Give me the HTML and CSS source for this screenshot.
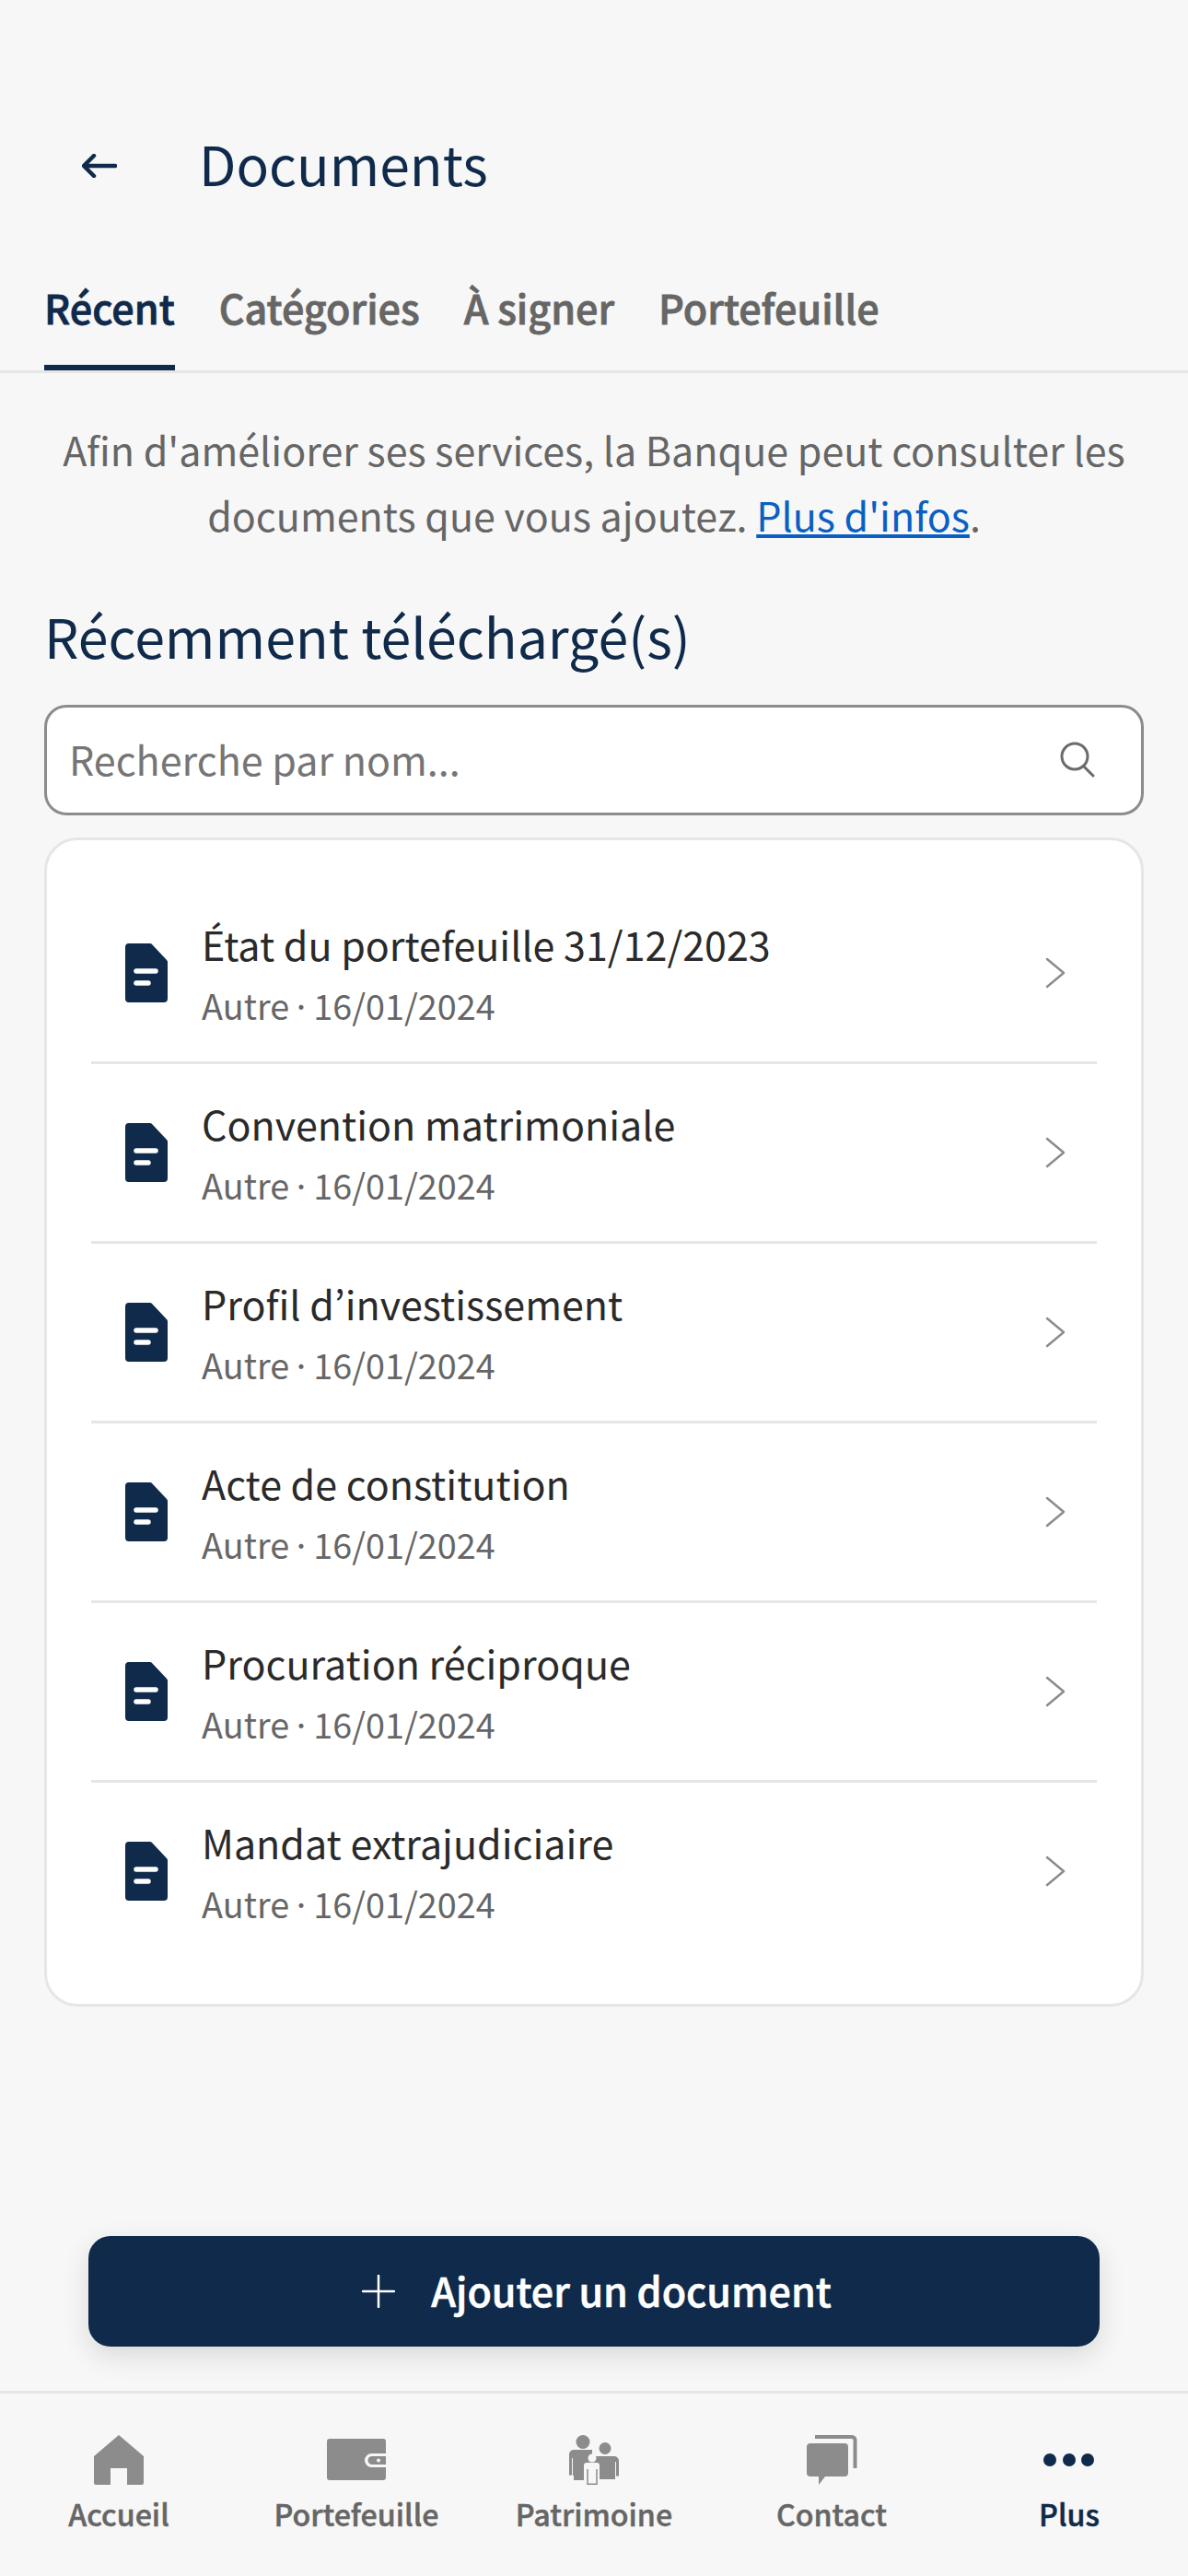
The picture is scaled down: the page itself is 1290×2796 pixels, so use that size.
FILE: index.html
```html
<!DOCTYPE html>
<html lang="fr">
<head>
<meta charset="utf-8">
<title>Documents</title>
<link rel="stylesheet" href="styles.css">
</head>
<body>
<div class="page">
  <header class="topbar">
    <svg class="back" viewBox="0 0 38 26"><path d="M36 13H3M13 2 2 13l11 11" fill="none" stroke="#0f2a4a" stroke-width="4.5" stroke-linecap="round" stroke-linejoin="round"/></svg>
    <h1 class="title">Documents</h1>
  </header>
  <nav class="tabs">
    <span class="tab tab-active">Récent</span>
    <span class="tab">Catégories</span>
    <span class="tab">À signer</span>
    <span class="tab">Portefeuille</span>
  </nav>
  <p class="info">Afin d'améliorer ses services, la Banque peut consulter les documents que vous ajoutez. <a class="link" href="#">Plus d'infos</a>.</p>
  <h2 class="heading">Récemment téléchargé(s)</h2>
  <div class="search">
    <span class="placeholder">Recherche par nom...</span>
    <svg class="search-icon" viewBox="0 0 38 40"><circle cx="16" cy="16" r="14" fill="none" stroke="#6b6b6b" stroke-width="3"/><path d="M26 27l10 10" stroke="#6b6b6b" stroke-width="3" stroke-linecap="round"/></svg>
  </div>
  <section class="card">
    <div class="row">
      <svg class="doc" viewBox="0 0 46 64"><path class="doc-body" d="M4 0H27a3 3 0 0 1 2 1L45 18a3 3 0 0 1 1 2V60a4 4 0 0 1-4 4H4a4 4 0 0 1-4-4V4a4 4 0 0 1 4-4z"/><path class="doc-lines" d="M12 30H33M12 43H25"/></svg>
      <div class="row-text"><div class="row-title">État du portefeuille 31/12/2023</div><div class="row-sub">Autre · 16/01/2024</div></div>
      <svg class="chev" viewBox="0 0 24 36"><path d="M3 3l18 15L3 33" fill="none" stroke="#8c8c8c" stroke-width="2.500" stroke-linecap="round" stroke-linejoin="round"/></svg>
    </div>
    <div class="row">
      <svg class="doc" viewBox="0 0 46 64"><path class="doc-body" d="M4 0H27a3 3 0 0 1 2 1L45 18a3 3 0 0 1 1 2V60a4 4 0 0 1-4 4H4a4 4 0 0 1-4-4V4a4 4 0 0 1 4-4z"/><path class="doc-lines" d="M12 30H33M12 43H25"/></svg>
      <div class="row-text"><div class="row-title">Convention matrimoniale</div><div class="row-sub">Autre · 16/01/2024</div></div>
      <svg class="chev" viewBox="0 0 24 36"><path d="M3 3l18 15L3 33" fill="none" stroke="#8c8c8c" stroke-width="2.500" stroke-linecap="round" stroke-linejoin="round"/></svg>
    </div>
    <div class="row">
      <svg class="doc" viewBox="0 0 46 64"><path class="doc-body" d="M4 0H27a3 3 0 0 1 2 1L45 18a3 3 0 0 1 1 2V60a4 4 0 0 1-4 4H4a4 4 0 0 1-4-4V4a4 4 0 0 1 4-4z"/><path class="doc-lines" d="M12 30H33M12 43H25"/></svg>
      <div class="row-text"><div class="row-title">Profil d’investissement</div><div class="row-sub">Autre · 16/01/2024</div></div>
      <svg class="chev" viewBox="0 0 24 36"><path d="M3 3l18 15L3 33" fill="none" stroke="#8c8c8c" stroke-width="2.500" stroke-linecap="round" stroke-linejoin="round"/></svg>
    </div>
    <div class="row">
      <svg class="doc" viewBox="0 0 46 64"><path class="doc-body" d="M4 0H27a3 3 0 0 1 2 1L45 18a3 3 0 0 1 1 2V60a4 4 0 0 1-4 4H4a4 4 0 0 1-4-4V4a4 4 0 0 1 4-4z"/><path class="doc-lines" d="M12 30H33M12 43H25"/></svg>
      <div class="row-text"><div class="row-title">Acte de constitution</div><div class="row-sub">Autre · 16/01/2024</div></div>
      <svg class="chev" viewBox="0 0 24 36"><path d="M3 3l18 15L3 33" fill="none" stroke="#8c8c8c" stroke-width="2.500" stroke-linecap="round" stroke-linejoin="round"/></svg>
    </div>
    <div class="row">
      <svg class="doc" viewBox="0 0 46 64"><path class="doc-body" d="M4 0H27a3 3 0 0 1 2 1L45 18a3 3 0 0 1 1 2V60a4 4 0 0 1-4 4H4a4 4 0 0 1-4-4V4a4 4 0 0 1 4-4z"/><path class="doc-lines" d="M12 30H33M12 43H25"/></svg>
      <div class="row-text"><div class="row-title">Procuration réciproque</div><div class="row-sub">Autre · 16/01/2024</div></div>
      <svg class="chev" viewBox="0 0 24 36"><path d="M3 3l18 15L3 33" fill="none" stroke="#8c8c8c" stroke-width="2.500" stroke-linecap="round" stroke-linejoin="round"/></svg>
    </div>
    <div class="row">
      <svg class="doc" viewBox="0 0 46 64"><path class="doc-body" d="M4 0H27a3 3 0 0 1 2 1L45 18a3 3 0 0 1 1 2V60a4 4 0 0 1-4 4H4a4 4 0 0 1-4-4V4a4 4 0 0 1 4-4z"/><path class="doc-lines" d="M12 30H33M12 43H25"/></svg>
      <div class="row-text"><div class="row-title">Mandat extrajudiciaire</div><div class="row-sub">Autre · 16/01/2024</div></div>
      <svg class="chev" viewBox="0 0 24 36"><path d="M3 3l18 15L3 33" fill="none" stroke="#8c8c8c" stroke-width="2.500" stroke-linecap="round" stroke-linejoin="round"/></svg>
    </div>
  </section>
  <div class="spacer"></div>
  <button class="add">
    <svg class="plus" viewBox="0 0 36 36"><path d="M18 1V35M1 18H35" stroke="#fff" stroke-width="2.500" stroke-linecap="round"/></svg>
    <span class="add-label">Ajouter un document</span>
  </button>
  <nav class="bottom">
    <div class="nav-item">
      <svg class="nav-icon" viewBox="0 0 72 54"><path fill="#8c8c8c" d="M36 0 63 23V52a2 2 0 0 1-2 2H45V36H27V54H11a2 2 0 0 1-2-2V23z"/></svg>
      <span>Accueil</span>
    </div>
    <div class="nav-item">
      <svg class="nav-icon" viewBox="0 0 72 54"><path fill="#8c8c8c" d="M7 4H65a3 3 0 0 1 3 3V46a3 3 0 0 1-3 3H7a3 3 0 0 1-3-3V7a3 3 0 0 1 3-3z"/><path fill="#f7f7f7" d="M68 20H52.500a7.500 7.500 0 0 0 0 15H68z"/><path fill="#8c8c8c" d="M68 23H53a4.500 4.500 0 0 0 0 9H68z"/><circle fill="#f7f7f7" cx="60" cy="27.500" r="2"/></svg>
      <span>Portefeuille</span>
    </div>
    <div class="nav-item">
      <svg class="nav-icon" viewBox="0 0 72 54"><g fill="#8c8c8c"><circle cx="24" cy="7.500" r="7.500"/><circle cx="48" cy="14.500" r="6.500"/><path d="M14 16H34V49H14V44H13V25H12V43a2 2 0 0 1-3 0V21a5 5 0 0 1 5-5z"/><path d="M34 23H58a5 5 0 0 1 5 5V44a2 2 0 0 1-3 0V29H59V48H34z"/></g><path fill="#f7f7f7" d="M25 33a3 3 0 0 1 3-3H39a3 3 0 0 1 3 3V54H25z"/><circle cx="34" cy="25" r="4.500" fill="#f7f7f7"/><path d="M29 37V53.200H39V37" stroke="#8c8c8c" stroke-width="1.500" fill="none"/></svg>
      <span>Patrimoine</span>
    </div>
    <div class="nav-item">
      <svg class="nav-icon" viewBox="0 0 72 54"><path fill="none" stroke="#8c8c8c" stroke-width="4" d="M18 2H58a3.500 3.500 0 0 1 3.500 3.500V36"/><path fill="#8c8c8c" d="M13 9H50a4 4 0 0 1 4 4V41a4 4 0 0 1-4 4H29L22 54V45H13a4 4 0 0 1-4-4V13a4 4 0 0 1 4-4z"/></svg>
      <span>Contact</span>
    </div>
    <div class="nav-item nav-active">
      <svg class="nav-icon" viewBox="0 0 72 54"><g fill="#0f2a4a"><circle cx="15" cy="27" r="7"/><circle cx="36" cy="27" r="7"/><circle cx="56" cy="27" r="7"/></g></svg>
      <span>Plus</span>
    </div>
  </nav>
</div>
</body>
</html>
```
FILE: styles.css
```css
* { box-sizing: border-box; }
html, body { margin: 0; padding: 0; }
body {
  background: #f7f7f7;
  font-family: "Noto Sans CJK JP", "Noto Sans", sans-serif;
  color: #262626;
}
.page { display: flex; flex-direction: column; height: 2796px; }

.topbar { display: flex; align-items: center; height: 84px; margin-top: 138px; padding-left: 89px; }
.back { width: 38px; height: 26px; flex: none; }
.title { margin: -7px 0 0 89px; font-size: 58.8px; line-height: 84px; font-weight: 400; color: #0f2a4a; }

.tabs { display: flex; gap: 48px; height: 183px; padding: 84px 48px 0; border-bottom: 3px solid #e6e6e6; }
.tab { font-size: 43.1px; line-height: 55px; font-weight: 500; color: #666; height: 96px; -webkit-text-stroke: 0.8px currentColor; }
.tab-active { color: #0f2a4a; border-bottom: 6px solid #0f2a4a; }

.info { margin: 47px 48px 0; font-size: 43px; line-height: 71px; color: #666; text-align: center; }
.link { color: #0a5fc4; text-decoration: underline; }

.heading { margin: 54px 48px 0; font-size: 59px; line-height: 84px; font-weight: 400; color: #0f2a4a; }

.search {
  display: flex; align-items: center; justify-content: space-between;
  height: 120px; margin: 33px 48px 0; padding: 0 50px 0 24px;
  background: #fff; border: 3px solid #8c8c8c; border-radius: 24px;
}
.placeholder { font-size: 43px; line-height: 60px; color: #757575; margin-top: -4px; }
.search-icon { width: 38px; height: 40px; flex: none; }

.card { margin: 24px 48px 0; padding: 48px 48px; background: #fff; border: 3px solid #e6e6e6; border-radius: 36px; }
.row { display: flex; align-items: center; height: 195px; border-bottom: 3px solid #e6e6e6; padding: 0 33px 0 37px; }
.row:last-child { border-bottom: 0; height: 192px; }
.doc { width: 46px; height: 64px; flex: none; }
.doc-body { fill: #0f2a4a; }
.doc-lines { fill: none; stroke: #fff; stroke-width: 5.5px; stroke-linecap: round; }
.row-text { flex: 1; margin-left: 37px; padding-top: 3px; }
.row-title { font-size: 43px; line-height: 66px; color: #2a2a2a; }
.row-sub { font-size: 37.8px; line-height: 66px; color: #666; word-spacing: -6px; margin-top: 1px; }
.chev { width: 24px; height: 36px; flex: none; }

.spacer { flex: 1; }

.add {
  display: flex; align-items: center; justify-content: center; gap: 39px;
  width: 1098px; height: 120px; margin: 0 96px 48px; padding: 0 0 0 6px;
  background: #0f2a4a; color: #fff; border: 0; border-radius: 24px;
  font-family: inherit; font-size: 43px; font-weight: 500; line-height: 60px;
  box-shadow: 0 10px 30px rgba(0,0,0,.12);
}
.add-label { margin-top: -4px; -webkit-text-stroke: 0.6px currentColor; }
.plus { width: 36px; height: 36px; flex: none; }

.bottom { display: grid; grid-template-columns: repeat(5, 1fr); height: 201px; padding-top: 45px; border-top: 3px solid #e6e6e6; }
.nav-item { display: flex; flex-direction: column; align-items: center; font-size: 32.2px; line-height: 48px; font-weight: 500; color: #666; -webkit-text-stroke: 0.5px currentColor; }
.nav-icon { width: 72px; height: 54px; margin-bottom: 7px; }
.nav-active { color: #0f2a4a; }
```
